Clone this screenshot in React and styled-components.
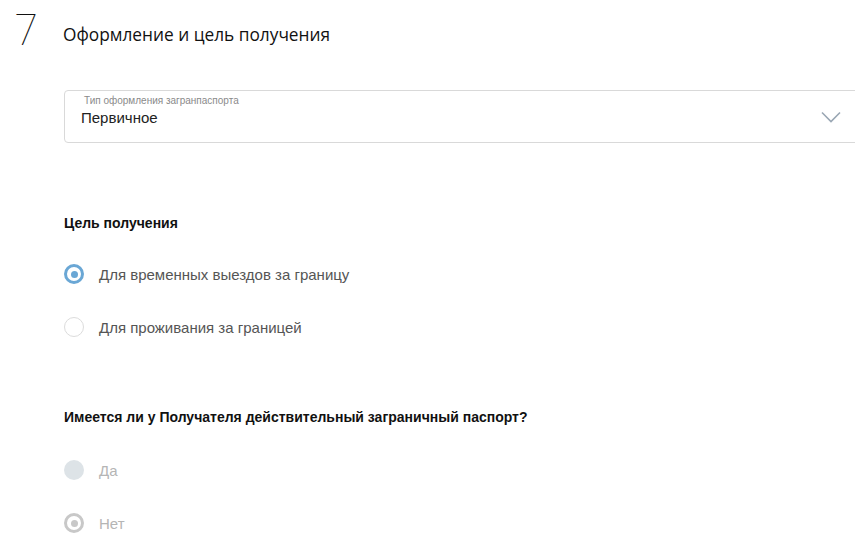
import React, { useState } from "react";
import styled, { createGlobalStyle } from "styled-components";

const GlobalStyle = createGlobalStyle`
  html, body {
    margin: 0;
    padding: 0;
    background: #fff;
    overflow: hidden;
  }
  body {
    font-family: "Liberation Sans", Arial, sans-serif;
  }
`;

const Page = styled.div`
  width: 880px;
  height: 544px;
  box-sizing: border-box;
  padding: 8px 0 0 14px;
`;

const StepHeader = styled.div`
  display: flex;
  align-items: flex-start;
  height: 82px;
`;

const StepNumber = styled.div`
  font-family: "Noto Sans", "Open Sans", sans-serif;
  font-weight: 100;
  font-size: 42px;
  line-height: 42px;
  color: #111;
  width: 49px;
`;

const StepTitle = styled.h1`
  margin: 15px 0 0;
  font-family: "Open Sans", "Noto Sans", sans-serif;
  font-weight: 400;
  font-size: 17.3px;
  color: #111;
`;

const Body = styled.div`
  padding-left: 50px;
`;

const SelectBox = styled.div`
  position: relative;
  height: 53px;
  border: 1px solid #d9d9d9;
  border-radius: 4px;
  box-sizing: border-box;
  padding: 4px 0 0 16px;
  margin-bottom: 71px;
`;

const SelectLabel = styled.div`
  font-size: 10px;
  color: #8a8a8a;
  padding-left: 3px;
  line-height: 12px;
`;

const SelectValue = styled.div`
  font-size: 15px;
  color: #222;
  line-height: 18px;
  margin-top: 2px;
`;

const Chevron = styled.svg`
  position: absolute;
  right: 38px;
  top: 20px;
`;

const Heading = styled.h2`
  margin: 0;
  font-size: 14px;
  font-weight: 700;
  color: #111;
  line-height: 18px;
`;

const RadioList = styled.div`
  display: flex;
  flex-direction: column;
  gap: 31px;
  margin-top: ${(p) => p.$offset || 31}px;
  margin-bottom: 70px;
`;

const RadioRow = styled.label`
  display: flex;
  align-items: center;
  gap: 15px;
  height: 22px;
  cursor: ${(p) => (p.disabled ? "default" : "pointer")};
`;

const RadioDot = styled.span`
  width: 20px;
  height: 20px;
  box-sizing: border-box;
  border-radius: 50%;
  display: flex;
  align-items: center;
  justify-content: center;
  border: ${(p) =>
    p.checked
      ? `3px solid ${p.disabled ? "#c8c8c8" : "#6aa7d5"}`
      : p.disabled
      ? "none"
      : "1px solid #dcdcdc"};
  background: ${(p) => (p.disabled && !p.checked ? "#dde3e7" : "#fff")};

  &::after {
    content: "";
    display: ${(p) => (p.checked ? "block" : "none")};
    width: 7px;
    height: 7px;
    border-radius: 50%;
    background: ${(p) => (p.disabled ? "#c8c8c8" : "#6aa7d5")};
  }
`;

const RadioText = styled.span`
  font-size: 15px;
  color: ${(p) => (p.disabled ? "#b5b5b5" : "#555")};
`;

const Radio = ({ checked, disabled, label, onClick }) => (
  <RadioRow disabled={disabled} onClick={disabled ? undefined : onClick}>
    <RadioDot checked={checked} disabled={disabled} />
    <RadioText disabled={disabled}>{label}</RadioText>
  </RadioRow>
);

const purposes = ["Для временных выездов за границу", "Для проживания за границей"];

const App = () => {
  const [purpose, setPurpose] = useState(0);

  return (
    <>
      <GlobalStyle />
      <Page>
        <StepHeader>
          <StepNumber>7</StepNumber>
          <StepTitle>Оформление и цель получения</StepTitle>
        </StepHeader>
        <Body>
          <SelectBox>
            <SelectLabel>Тип оформления загранпаспорта</SelectLabel>
            <SelectValue>Первичное</SelectValue>
            <Chevron width="20" height="12" viewBox="0 0 20 12">
              <path d="M1 1.5 L10 10.5 L19 1.5" fill="none" stroke="#9aa7b4" strokeWidth="1.6" />
            </Chevron>
          </SelectBox>

          <Heading>Цель получения</Heading>
          <RadioList>
            {purposes.map((p, i) => (
              <Radio key={p} label={p} checked={purpose === i} onClick={() => setPurpose(i)} />
            ))}
          </RadioList>

          <Heading>Имеется ли у Получателя действительный заграничный паспорт?</Heading>
          <RadioList $offset={33}>
            <Radio label="Да" disabled />
            <Radio label="Нет" checked disabled />
          </RadioList>
        </Body>
      </Page>
    </>
  );
};

export default App;
